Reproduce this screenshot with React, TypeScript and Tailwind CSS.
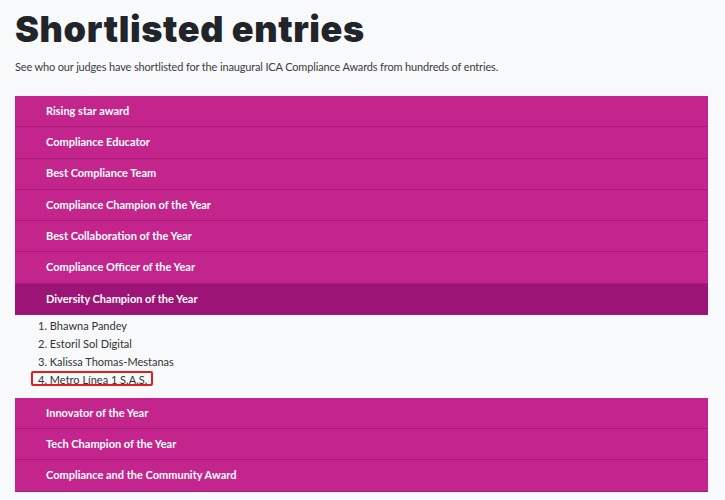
const categories = [
  "Rising star award",
  "Compliance Educator",
  "Best Compliance Team",
  "Compliance Champion of the Year",
  "Best Collaboration of the Year",
  "Compliance Officer of the Year",
];

const after = [
  "Innovator of the Year",
  "Tech Champion of the Year",
  "Compliance and the Community Award",
];

const entries = ["Bhawna Pandey", "Estoril Sol Digital", "Kalissa Thomas-Mestanas", "Metro Línea 1 S.A.S."];

function Bar({ label, open = false }: { label: string; open?: boolean }) {
  return (
    <div
      className={`h-[31.3px] flex items-center pl-[31px] border-b border-[#a51b79] text-white text-[11px] font-bold ${
        open ? "bg-[#9c1475]" : "bg-[#c4258c]"
      }`}
    >
      {label}
    </div>
  );
}

export default function App() {
  return (
    <div className="min-h-[500px] bg-[#f8f9fa] pl-[15px] pr-[17px] pt-[7px] font-['Lato','Liberation_Sans',sans-serif]">
      <h1 className="text-[36px] leading-[44px] font-black text-[#212529] tracking-[0.6px] font-['Inter','Liberation_Sans',sans-serif]">
        Shortlisted entries
      </h1>
      <p className="mt-[8px] text-[11px] leading-[16px] tracking-[-0.15px] text-[#3d3d3d]">
        See who our judges have shortlisted for the inaugural ICA Compliance Awards from hundreds of entries.
      </p>
      <div className="mt-[21px]">
        {categories.map((c) => (
          <Bar key={c} label={c} />
        ))}
        <Bar label="Diversity Champion of the Year" open />
        <ol className="pt-[1.5px] pb-[8px] pl-[23px] text-[11px] text-[#333] leading-[18.3px]">
          {entries.map((e, i) => (
            <li key={e} className="relative">
              {i + 1}. {e}
              {i === 3 && (
                <span className="absolute -left-[7px] top-0 h-[15px] w-[122px] border-2 border-[#e0201f] rounded-[2px]" />
              )}
            </li>
          ))}
        </ol>
        {after.map((c) => (
          <Bar key={c} label={c} />
        ))}
      </div>
    </div>
  );
}
